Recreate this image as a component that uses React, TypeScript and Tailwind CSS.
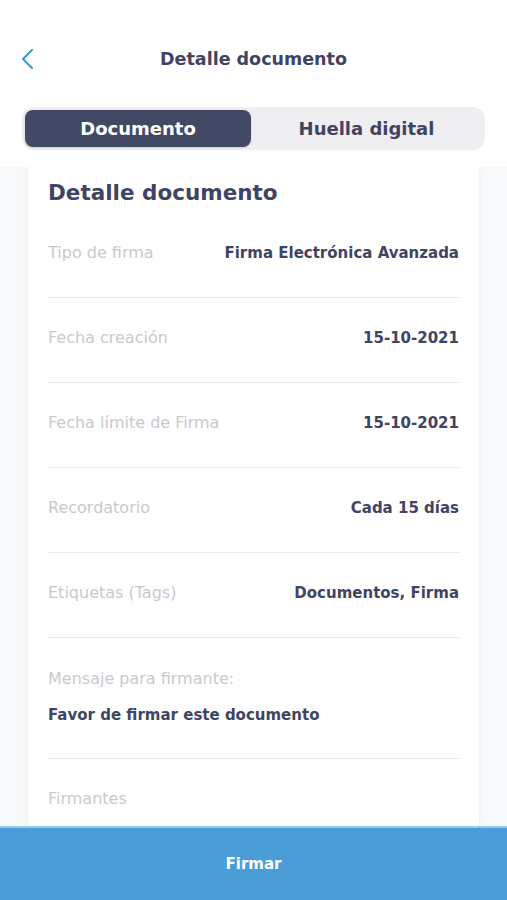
import React from 'react';

const FONT = { fontFamily: '"DejaVu Sans", "Noto Sans", sans-serif' };

const rows = [
  { label: 'Tipo de firma', value: 'Firma Electrónica Avanzada' },
  { label: 'Fecha creación', value: '15-10-2021' },
  { label: 'Fecha límite de Firma', value: '15-10-2021' },
  { label: 'Recordatorio', value: 'Cada 15 días' },
  { label: 'Etiquetas (Tags)', value: 'Documentos, Firma' },
];

const App: React.FC = () => {
  return (
    <div className="w-[507px] h-[900px] bg-white flex flex-col overflow-hidden" style={FONT}>
      {/* header */}
      <div className="h-[107px] shrink-0">
        <div className="flex items-center h-[40px] mt-[39px] px-[20px]">
          <svg width="16" height="24" viewBox="0 0 16 24" fill="none" stroke="#3f9bd6" strokeWidth="2.2" strokeLinecap="round" strokeLinejoin="round">
            <path d="M12 3 L3 12 L12 21" />
          </svg>
          <div className="flex-1 text-center text-[17.5px] font-bold text-[#3f4462] pr-[16px]">Detalle documento</div>
        </div>
      </div>

      {/* tabs */}
      <div className="px-[22px] shrink-0">
        <div className="flex h-[43px] rounded-xl bg-[#efeff1] p-[3px]">
          <div className="w-[226px] rounded-lg bg-[#424964] shadow-sm flex items-center justify-center text-white text-[18px] font-bold">
            Documento
          </div>
          <div className="flex-1 flex items-center justify-center text-[#3f4462] text-[18px] font-bold">
            Huella digital
          </div>
        </div>
      </div>

      {/* content */}
      <div className="flex-1 mt-[17px] bg-[#f8f9fb] px-[27px] overflow-hidden">
        <div className="bg-white border-x border-[#eceef2] shadow-[0_0_6px_rgba(0,0,0,0.04)] h-full px-[20px] pt-[12px]">
          <div className="text-[21.5px] leading-[28px] font-bold text-[#3f4462] mb-[6px]">Detalle documento</div>
          {rows.map((r) => (
            <div key={r.label} className="flex justify-between items-center pt-[30px] pb-[34px] border-b border-[#e8e8ea] leading-[20px]">
              <span className="text-[16px] text-[#c9c9cd]">{r.label}</span>
              <span className="text-[15px] font-bold text-[#3f4462]">{r.value}</span>
            </div>
          ))}
          <div className="pt-[31px] pb-[33px] border-b border-[#e8e8ea] leading-[20px]">
            <div className="text-[16px] text-[#c9c9cd]">Mensaje para firmante:</div>
            <div className="text-[15px] font-bold text-[#3f4462] mt-[16px]">Favor de firmar este documento</div>
          </div>
          <div className="pt-[30px] text-[16px] leading-[20px] text-[#c9c9cd]">Firmantes</div>
        </div>
      </div>

      {/* footer */}
      <div className="h-[74px] shrink-0 bg-[#4a9dd7] border-t-2 border-[#8fcdf2] flex items-center justify-center text-white text-[15px] font-bold">
        Firmar
      </div>
    </div>
  );
};

export default App;
